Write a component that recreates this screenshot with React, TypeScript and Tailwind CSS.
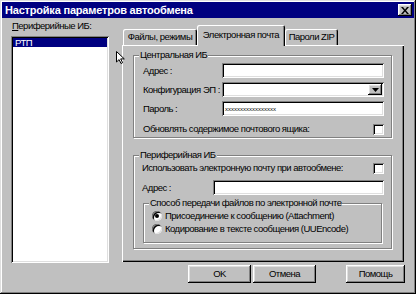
import React from "react";

const raised =
  "shadow-[inset_-1px_-1px_0_#000,inset_1px_1px_0_#fff,inset_-2px_-2px_0_#808080,inset_2px_2px_0_#dfdfdf]";
const sunken =
  "shadow-[inset_1px_1px_0_#808080,inset_-1px_-1px_0_#fff,inset_2px_2px_0_#000,inset_-2px_-2px_0_#dfdfdf]";
const etched =
  "border border-[#808080] shadow-[1px_1px_0_#fff,inset_1px_1px_0_#fff]";

function Field({ w, children }: { w: string; children?: React.ReactNode }) {
  return (
    <div className={`${w} h-[15px] bg-white ${sunken} flex items-center pl-[3px] shrink-0 relative`}>
      {children}
    </div>
  );
}

function Check() {
  return <div className={`w-[11px] h-[11px] bg-white ${sunken} shrink-0`} />;
}

function Radio({ on }: { on?: boolean }) {
  return (
    <div className="w-[10px] h-[10px] rounded-full bg-white shadow-[inset_1px_1px_0_#808080,inset_-1px_-1px_0_#dfdfdf,inset_2px_2px_0_#000] flex items-center justify-center shrink-0">
      {on && <div className="w-[4px] h-[4px] rounded-full bg-black" />}
    </div>
  );
}

function Btn({ label, cls }: { label: string; cls: string }) {
  return (
    <div className={`${cls} h-[18px] bg-[#c0c0c0] ${raised} flex items-center justify-center`}>{label}</div>
  );
}

export default function App() {
  return (
    <div className="relative w-[416px] h-[294px] bg-[#c0c0c0] flex flex-col overflow-hidden whitespace-nowrap font-['Liberation_Sans',Arial,sans-serif] text-[9.5px] leading-[12px] tracking-[-0.5px] text-black shadow-[inset_-1px_-1px_0_#000,inset_1px_1px_0_#dfdfdf,inset_-2px_-2px_0_#808080,inset_2px_2px_0_#fff]">
      {/* Title bar */}
      <div className="mx-[2px] mt-[2px] h-[16px] bg-[#000080] flex items-center justify-between pl-[3px] pr-[2px] shrink-0">
        <span className="text-white font-bold text-[11px] tracking-[-0.2px]">Настройка параметров автообмена</span>
        <div className={`w-[14px] h-[12px] bg-[#c0c0c0] ${raised} flex items-center justify-center`}>
          <svg width="8" height="7" viewBox="0 0 8 7">
            <path d="M0 0h2l2 2.5L6 0h2L5 3.5 8 7H6L4 4.5 2 7H0l3-3.5z" fill="#000" />
          </svg>
        </div>
      </div>

      {/* Body */}
      <div className="flex pl-[11px] shrink-0">
        {/* Left column */}
        <div className="w-[98px] flex flex-col">
          <div className="mt-[2px] h-[12px] pl-[1px]">
            <span className="underline">П</span>ериферийные ИБ:
          </div>
          <div className={`mt-[4px] h-[227px] bg-white ${sunken} p-[2px]`}>
            <div className="h-[9px] leading-[9px] bg-[#000080] text-white pl-[2px]">РТП</div>
          </div>
        </div>

        {/* Right column */}
        <div className="ml-[13px] w-[282px] flex flex-col">
          <div className="mt-[7px] h-[20px] flex items-end pl-[1px]">
            <div className="w-[74px] h-[16px] flex items-center justify-center rounded-t-[2px] shadow-[inset_1px_1px_0_#fff,inset_-1px_0_0_#000,inset_-2px_0_0_#808080]">
              Файлы, режимы
            </div>
            <div className="relative z-10 w-[88px] h-[21px] mb-[-1px] bg-[#c0c0c0] flex items-center justify-center pb-[2px] rounded-t-[2px] shadow-[inset_1px_1px_0_#fff,inset_-1px_0_0_#000,inset_-2px_0_0_#808080]">
              Электронная почта
            </div>
            <div className="w-[53px] h-[16px] flex items-center justify-center rounded-t-[2px] shadow-[inset_1px_1px_0_#fff,inset_-1px_0_0_#000,inset_-2px_0_0_#808080]">
              Пароли ZIP
            </div>
          </div>

          <div className="h-[217px] bg-[#c0c0c0] pt-[4px] pl-[11px] pr-[12px] shadow-[inset_1px_1px_0_#fff,inset_-1px_-1px_0_#000,inset_-2px_-2px_0_#808080]">
            {/* Central IB */}
            <fieldset className={etched}>
              <legend className="ml-[5px] px-[1px] bg-[#c0c0c0] leading-[12px]">Центральная ИБ</legend>
              <div className="pl-[9px] pr-[7px] pb-[2px] flex flex-col">
                <div className="mt-[2px] h-[15px] flex items-center">
                  <span className="flex-1">Адрес :</span>
                  <Field w="w-[162px]" />
                </div>
                <div className="mt-[4px] h-[15px] flex items-center">
                  <span className="flex-1">Конфигурация ЭП :</span>
                  <Field w="w-[162px]">
                    <div className={`absolute right-[2px] top-[2px] w-[14px] h-[11px] bg-[#c0c0c0] ${raised} flex items-center justify-center`}>
                      <svg width="7" height="4" viewBox="0 0 7 4">
                        <path d="M0 0h7L3.5 4z" fill="#000" />
                      </svg>
                    </div>
                  </Field>
                </div>
                <div className="mt-[4px] h-[15px] flex items-center">
                  <span className="flex-1">Пароль :</span>
                  <Field w="w-[162px]">
                    <span className="text-[6px] leading-[6px] tracking-[0px]">xxxxxxxxxxxxxxxxx</span>
                  </Field>
                </div>
                <div className="mt-[7px] h-[12px] flex items-center">
                  <span className="flex-1">Обновлять содержимое почтового ящика:</span>
                  <Check />
                </div>
              </div>
            </fieldset>

            {/* Peripheral IB */}
            <fieldset className={`${etched} mt-[11px]`}>
              <legend className="ml-[5px] px-[1px] bg-[#c0c0c0] leading-[12px]">Периферийная ИБ</legend>
              <div className="pl-[8px] pr-[7px] pb-[5px] flex flex-col">
                <div className="mt-[1px] h-[12px] flex items-center">
                  <span className="flex-1">Использовать электронную почту при автообмене:</span>
                  <Check />
                </div>
                <div className="mt-[6px] h-[15px] flex items-center">
                  <span className="flex-1">Адрес :</span>
                  <Field w="w-[171px]" />
                </div>
                <fieldset className={`${etched} mt-[2px] ml-[1px] mr-[2px]`}>
                  <legend className="ml-[5px] px-[1px] bg-[#c0c0c0] leading-[12px]">
                    Способ передачи файлов по электронной почте
                  </legend>
                  <div className="pl-[8px] pb-[7px] flex flex-col">
                    <div className="mt-[1px] h-[12px] flex items-center gap-[3px]">
                      <Radio on />
                      <span>Присоединение к сообщению (Attachment)</span>
                    </div>
                    <div className="mt-[1px] h-[12px] flex items-center gap-[3px]">
                      <Radio />
                      <span>Кодирование в тексте сообщения (UUEncode)</span>
                    </div>
                  </div>
                </fieldset>
              </div>
            </fieldset>
          </div>
        </div>
      </div>

      {/* Buttons */}
      <div className="mt-[2px] flex pl-[188px] shrink-0">
        <Btn label="OK" cls="w-[63px]" />
        <Btn label="Отмена" cls="w-[63px] ml-[2px]" />
        <Btn label="Помощь" cls="w-[59px] ml-[30px]" />
      </div>

      {/* Mouse cursor */}
      <svg className="absolute left-[116px] top-[51px]" width="9" height="13" viewBox="0 0 9 13">
        <path d="M0.5 0.5v10.5l2.6-2.4 1.9 3.9 1.6-0.8-1.9-3.8h3.6z" fill="#fff" stroke="#000" strokeWidth="1" />
      </svg>
    </div>
  );
}
